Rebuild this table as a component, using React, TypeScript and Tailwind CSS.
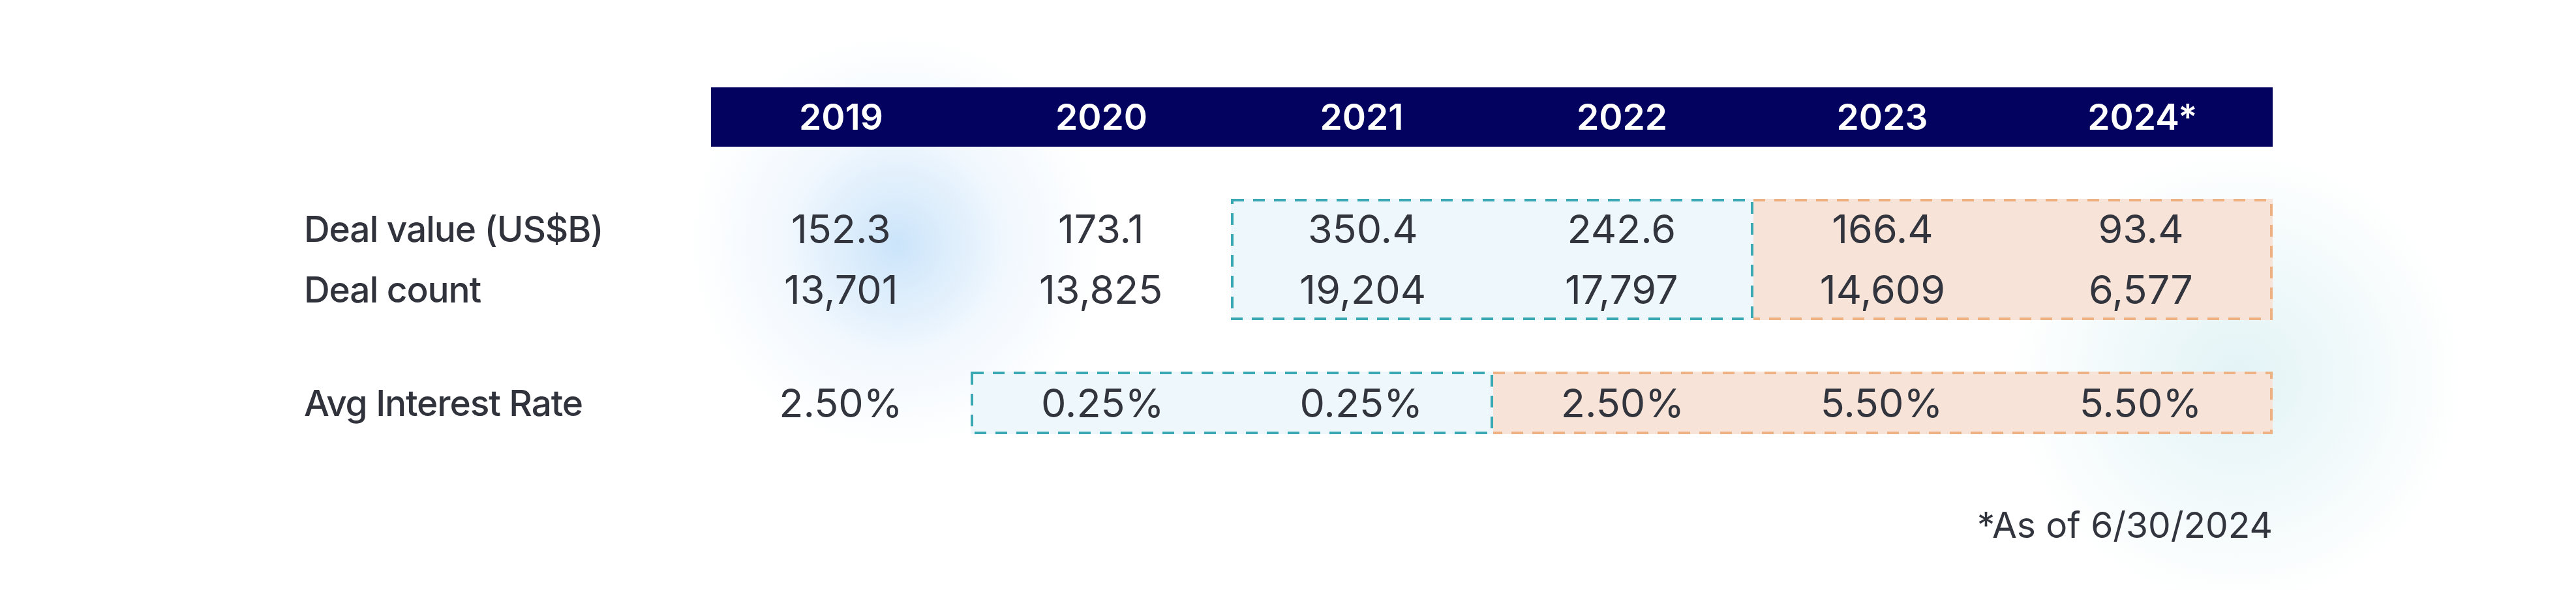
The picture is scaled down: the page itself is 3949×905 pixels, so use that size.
import React from 'react';

const years = ['2019', '2020', '2021', '2022', '2023', '2024*'];

const valueCls =
  'flex items-center justify-center text-[61px] font-normal leading-none text-[#32353d]';
const labelCls =
  'flex items-center text-[55px] font-medium leading-none tracking-[-0.02em] text-[#30333b]';

function Cells({ values, cols }: { values: string[]; cols: number }) {
  return (
    <>
      {values.map((v, i) => (
        <div key={i} className={valueCls} style={{ width: `${100 / cols}%` }}>
          {v}
        </div>
      ))}
    </>
  );
}

// dashed outline drawn over a box, so the dash length matches the picture
function Dashes({ w, h, color, openLeft }: { w: number; h: number; color: string; openLeft?: boolean }) {
  const d = openLeft
    ? `M0 2 H${w - 2} V${h - 2} H0`
    : `M2 2 H${w - 2} V${h - 2} H2 Z`;
  return (
    <svg className="pointer-events-none absolute inset-0" width={w} height={h}>
      <path d={d} fill="none" stroke={color} strokeWidth={4} strokeDasharray="18 14" />
    </svg>
  );
}

export default function App() {
  return (
    <div
      className="relative h-[905px] w-full overflow-hidden bg-white"
      style={{ fontFamily: 'Inter, "Noto Sans", sans-serif' }}
    >
      {/* soft background glows */}
      <div className="pointer-events-none absolute left-[1055px] top-[50px] h-[640px] w-[640px] rounded-full bg-[radial-gradient(circle,#e3f0fc_0%,#f2f8fe_40%,rgba(255,255,255,0)_70%)]" />
      <div className="pointer-events-none absolute left-[1215px] top-[215px] h-[320px] w-[320px] rounded-full bg-[radial-gradient(circle,#cbe4fa_0%,#e0effc_40%,rgba(255,255,255,0)_72%)]" />
      <div className="pointer-events-none absolute left-[3080px] top-[230px] h-[700px] w-[700px] rounded-full bg-[radial-gradient(circle,#e2f3f6_0%,#f0f9fa_35%,rgba(255,255,255,0)_70%)]" />

      <div className="relative ml-[466px] w-[3018px] pt-[134px]">
        {/* header */}
        <div className="flex">
          <div className="w-[624px]" />
          <div className="flex h-[91px] w-[2394px] bg-[#03035f]">
            {years.map((y) => (
              <div
                key={y}
                className="flex w-[399px] items-center justify-center text-[55px] font-semibold leading-none text-white"
              >
                {y}
              </div>
            ))}
          </div>
        </div>

        {/* deal value / count */}
        <div className="mt-[80px] flex h-[186px]">
          <div className="flex w-[624px] flex-col">
            <div className={`${labelCls} h-[93px]`}>Deal value (US$B)</div>
            <div className={`${labelCls} h-[93px]`}>Deal count</div>
          </div>
          <div className="flex w-[797px] flex-col">
            <div className="flex h-[93px] w-full">
              <Cells values={['152.3', '173.1']} cols={2} />
            </div>
            <div className="flex h-[93px] w-full">
              <Cells values={['13,701', '13,825']} cols={2} />
            </div>
          </div>
          <div className="relative flex w-[801px] flex-col bg-[#edf7fc] px-[4px]">
            <Dashes w={801} h={186} color="#3aa8b3" />
            <div className="flex flex-1">
              <Cells values={['350.4', '242.6']} cols={2} />
            </div>
            <div className="flex flex-1">
              <Cells values={['19,204', '17,797']} cols={2} />
            </div>
          </div>
          <div className="relative flex w-[796px] flex-col bg-[#f7e3d7] pr-[4px]">
            <Dashes w={796} h={186} color="#edb184" openLeft />
            <div className="flex flex-1">
              <Cells values={['166.4', '93.4']} cols={2} />
            </div>
            <div className="flex flex-1">
              <Cells values={['14,609', '6,577']} cols={2} />
            </div>
          </div>
        </div>

        {/* interest rate */}
        <div className="mt-[79px] flex h-[96px]">
          <div className={`${labelCls} w-[624px]`}>Avg Interest Rate</div>
          <div className="flex w-[398px]">
            <Cells values={['2.50%']} cols={1} />
          </div>
          <div className="relative flex w-[801px] bg-[#edf7fc] px-[4px]">
            <Dashes w={801} h={96} color="#3aa8b3" />
            <Cells values={['0.25%', '0.25%']} cols={2} />
          </div>
          <div className="relative flex w-[1195px] bg-[#f7e3d7] pr-[4px]">
            <Dashes w={1195} h={96} color="#edb184" openLeft />
            <Cells values={['2.50%', '5.50%', '5.50%']} cols={3} />
          </div>
        </div>

        {/* footnote */}
        <div className="mt-[112px] text-right text-[55px] leading-none text-[#32353d]">
          *As of 6/30/2024
        </div>
      </div>
    </div>
  );
}
